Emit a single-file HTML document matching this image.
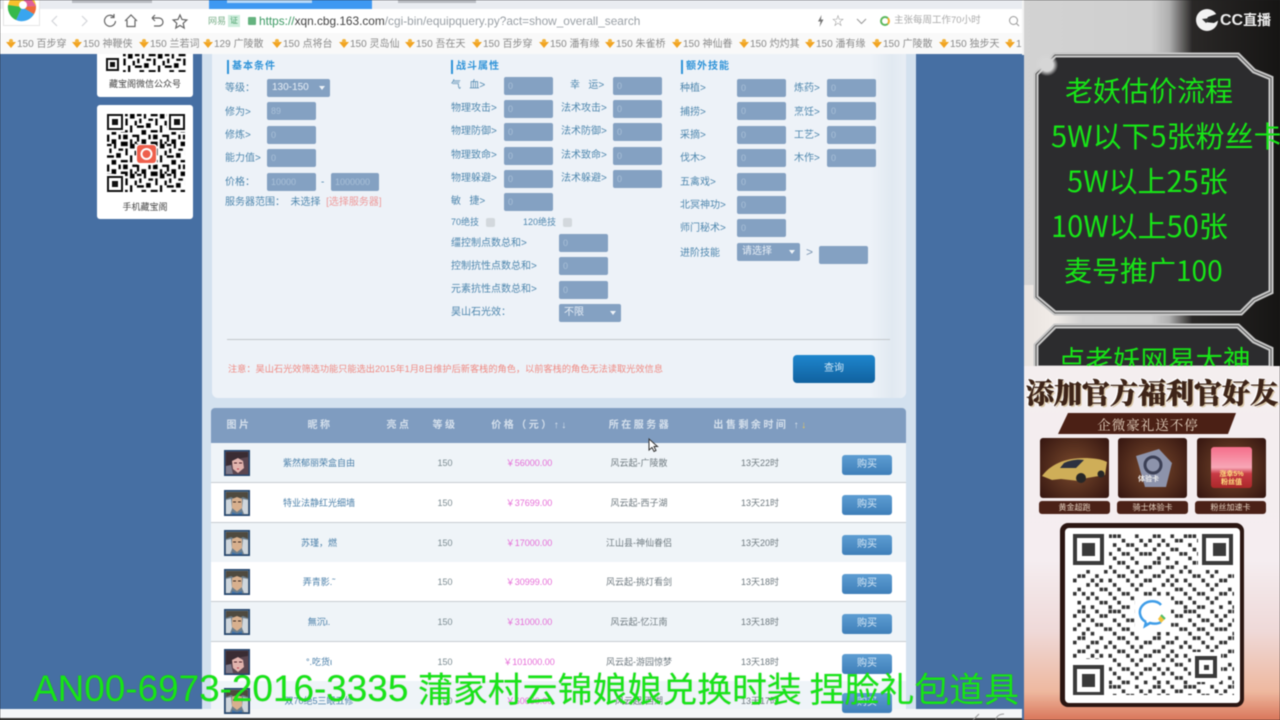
<!DOCTYPE html>
<html lang="zh"><head><meta charset="utf-8"><title>藏宝阁</title>
<style>
*{box-sizing:border-box}
html,body{margin:0;padding:0;width:1280px;height:720px;overflow:hidden;background:#222}
body{font-family:"Liberation Sans","Noto Sans CJK SC",sans-serif;position:relative}
#w{position:absolute;inset:0;filter:blur(.45px);overflow:hidden}
.a,.l,.i,.s,.h,.c{position:absolute}
.l{font-size:10px;color:#4f87ae;white-space:nowrap;line-height:14px}
.i{width:49px;height:18px;background:#84a1c2;border-radius:2px;color:#a9c0d8;font-size:9px;line-height:18px;padding-left:4px}
.s{height:18px;background:#84a1c2;border-radius:2px;color:#e7eef6;font-size:10px;line-height:18px;padding-left:5px}
.s:after{content:"";position:absolute;right:5px;top:7px;border:3px solid transparent;border-top:4px solid #eef3f8}
.h{font-size:10px;font-weight:bold;color:#2f93d8;white-space:nowrap;line-height:14px;border-left:2px solid #2f93d8;padding-left:3px;letter-spacing:1px}
.bm{position:absolute;top:33px;left:0;width:1022px;height:21px;background:#f9f9f9;white-space:nowrap;overflow:hidden}
.bm span{position:absolute;top:5px;font-size:10px;line-height:13px;color:#8a8a8a;padding-left:11px}
.bm span:before{content:"";position:absolute;left:0;top:4px;border-left:5px solid transparent;border-right:5px solid transparent;border-top:6px solid #f2a421}
.bm span:after{content:"";position:absolute;left:3px;top:1px;width:4px;height:4px;border-radius:50%;background:#f2b33d}
.r{position:absolute;left:211px;width:695px;height:40px;border-bottom:1px solid #c7ccd1;font-size:9px;line-height:41px}
.r b{position:absolute;top:0;font-weight:normal;text-align:center;transform:translateX(-50%);white-space:nowrap}
.r .n{left:108px;color:#4a7fa9}.r .v{left:234px;color:#7a8a90}.r .p{left:318px;color:#e66cd8}.r .g{left:428px;color:#6f7a80}.r .t{left:549px;color:#6f7a80}
.r svg{position:absolute;left:13px;top:7px;width:26px;height:26px}
.r i{position:absolute;left:631px;top:12px;width:50px;height:20px;border-radius:3px;background:linear-gradient(#5d9dd2,#3f7fb9);color:#d6e7f5;font-style:normal;font-size:10px;line-height:20px;text-align:center}
.th{position:absolute;top:418px;font-size:10px;font-weight:bold;line-height:16px;color:#d5e0ec;white-space:nowrap;letter-spacing:2.500px;transform:translateX(-50%)}
.g1{position:absolute;color:#17e517;white-space:nowrap;font-family:"Noto Sans CJK SC","Liberation Sans",sans-serif;line-height:1}
.lb{position:absolute;top:501px;height:13px;background:#4b2117;border-radius:3px;color:#e6d3c2;font-size:8px;line-height:13px;text-align:center}
.cd{position:absolute;top:438px;width:69px;height:60px;border-radius:3px;background:radial-gradient(circle,#7a4a2d,#341510)}
</style></head><body><div id="w">

<svg width="0" height="0" style="position:absolute"><defs>
<symbol id="m" viewBox="0 0 26 26"><rect width="26" height="26" fill="#24466e"/><rect x="1.500" y="1.500" width="23" height="23" fill="#6e7f8c"/><path d="M2 2h22v7l-5-2-6 3-6-3-5 2z" fill="#4f4a3f"/><path d="M8 9l5-2 5 2v9l-5 4-5-4z" fill="#d8b08e"/><path d="M2 10l5-1 1 10-2 5H2zM24 10l-5-1-1 10 2 5h4z" fill="#cfd6dc"/><path d="M9 12h3M14 12h3" stroke="#3b2a22" stroke-width="1"/><path d="M8 22l5 2 5-2v2.500H8z" fill="#3c6fa8"/></symbol>
<symbol id="f" viewBox="0 0 26 26"><rect width="26" height="26" fill="#24466e"/><rect x="1.500" y="1.500" width="23" height="23" fill="#5b4650"/><path d="M2 2h22v5l-6 1-6 2-5 5-5 1z" fill="#3a2c33"/><path d="M8 11l6-3 5 3 1 7-6 5-5-4z" fill="#e2b4ae"/><path d="M10 13h3M15 13h3" stroke="#4a2027" stroke-width="1"/><path d="M13 19h2" stroke="#b8394a" stroke-width="1"/><path d="M2 16l5-1 2 9H2z" fill="#7d7a8b"/></symbol>
</defs></svg>

<!-- browser chrome -->
<div class="a" style="left:0;top:0;width:1022px;height:9px;background:#e9ecf1"></div>
<div class="a" style="left:209px;top:0;width:163px;height:9px;background:#3e98f2"></div>
<div class="a" style="left:227px;top:0;width:85px;height:3px;background:#b7d8f8"></div>
<div class="a" style="left:72px;top:0;width:80px;height:3px;background:#b9bcc2"></div>
<div class="a" style="left:398px;top:0;width:78px;height:3px;background:#b9bcc2"></div>
<div class="a" style="left:0;top:9px;width:1022px;height:24px;background:#fff"></div>
<div class="a" style="left:3px;top:0;width:37px;height:26px;background:#fff;border:1px solid #e6e6e6;border-top:0"></div>
<svg class="a" style="left:7px;top:0" width="30" height="22" viewBox="0 0 30 22"><circle cx="15" cy="7" r="14" fill="#f7c02c"/><path d="M15 7L1 5A14 14 0 0 0 9 20z" fill="#36b94b"/><path d="M15 7L9 20A14 14 0 0 0 27 14z" fill="#39a5ef"/><path d="M15 7L27 14A14 14 0 0 0 29 6z" fill="#ef6a3c"/><path d="M15 7L29 6 25 0 17 0z" fill="#e0609a"/><circle cx="16" cy="5" r="4" fill="#fff"/></svg>
<svg class="a" style="left:50px;top:11px" width="145" height="20" viewBox="0 0 145 20" fill="none" stroke="#777" stroke-width="1.200"><path d="M7 5l-5 5 5 5M32 5l5 5-5 5" stroke="#d4d6da"/><path d="M64 6a5.500 5.500 0 1 0 1.500 4M64 3v3.500h-3.500" stroke="#666"/><path d="M75 10l6-6 6 6M77 9v6.500h8V9" stroke="#666"/><path d="M102 7h7a4 4 0 0 1 0 8h-5M102 7l3-3M102 7l3 3" stroke="#666"/><path d="M130 4l2 4.500 4.800.5-3.600 3.300 1 4.700-4.200-2.500-4.200 2.500 1-4.700-3.600-3.300 4.800-.5z" stroke="#666"/></svg>
<div class="a" style="left:208px;top:15px;font-size:9px;color:#7ab08a;line-height:12px">网易</div>
<div class="a" style="left:228px;top:15px;width:12px;height:12px;background:#cfeedd;font-size:8px;line-height:12px;text-align:center;color:#4fa36f">证</div>
<div class="a" style="left:248px;top:17px;width:8px;height:8px;background:#65b37f;border-radius:1px"></div>
<div class="a" style="left:259px;top:13px;font-size:11.850px;line-height:16px;white-space:nowrap;color:#9aa0a6"><span style="color:#3d9a64">https://</span><span style="color:#444">xqn.cbg.163.com</span>/cgi-bin/equipquery.py?act=show_overall_search</div>
<svg class="a" style="left:817px;top:15px" width="7" height="12" viewBox="0 0 7 12"><path d="M4.500 0L1 6.500h2.500L2.500 12 6.500 4.500H4z" fill="#777"/></svg>
<div class="a" style="left:832px;top:14px;font-size:12px;line-height:14px;color:#888">☆</div>
<svg class="a" style="left:856px;top:18px" width="11" height="7" fill="none" stroke="#999"><path d="M1 1l4.500 4.500L10 1"/></svg>
<div class="a" style="left:880px;top:16px;width:10px;height:10px;border-radius:50%;border:2px solid #5cb85c;border-right-color:#f0ad2e"></div>
<div class="a" style="left:894px;top:14px;font-size:9.500px;line-height:13px;color:#aaa;white-space:nowrap">主张每周工作70小时</div>
<svg class="a" style="left:1008px;top:15px" width="12" height="12" fill="none" stroke="#999"><circle cx="5.500" cy="5.500" r="4"/><path d="M8.500 8.500l2.500 2.500"/></svg>
<div class="bm">
<span style="left:6px">150 百步穿</span><span style="left:72px">150 神鞭侠</span><span style="left:139px">150 兰若词</span><span style="left:203px">129 广陵散</span><span style="left:272px">150 点将台</span><span style="left:339px">150 灵岛仙</span><span style="left:405px">150 吾在天</span><span style="left:472px">150 百步穿</span><span style="left:539px">150 潘有缘</span><span style="left:605px">150 朱雀桥</span><span style="left:672px">150 神仙眷</span><span style="left:739px">150 灼灼其</span><span style="left:805px">150 潘有缘</span><span style="left:872px">150 广陵散</span><span style="left:939px">150 独步天</span><span style="left:1005px">1</span>
</div>

<!-- page -->
<div class="a" style="left:0;top:54px;width:1022px;height:664px;background:#466fa3"></div>
<div class="a" style="left:0;top:709px;width:1022px;height:9px;background:#f4f6f7"></div>
<div class="a" style="left:0;top:718px;width:1022px;height:2px;background:#3a3936"></div>
<div class="a" style="left:202px;top:54px;width:714px;height:655px;background:#d3e1ef"></div>
<div class="a" style="left:212px;top:54px;width:694px;height:344px;background:#edf2f8;border-radius:0 0 6px 6px"></div>
<div class="a" style="left:870px;top:54px;width:36px;height:344px;background:linear-gradient(90deg,#edf2f8,#e1e9f1 60%,#e8eef5);border-radius:0 0 6px 0"></div>

<!-- left QR cards -->
<div class="a" style="left:97px;top:54px;width:96px;height:43px;background:#fff;border-radius:0 0 3px 3px"></div>
<svg class="a" style="left:105px;top:54px" width="81" height="18" viewBox="0 0 81 18"><defs><pattern id="sq" width="13" height="13" patternUnits="userSpaceOnUse" patternTransform="scale(2.300)"><path d="M0 0h2v1H0zM3 0h1v2H3zM6 0h3v1H6zM10 0h2v2h-2zM1 2h1v2H1zM5 2h2v1H5zM8 2h1v3H8zM12 3h1v2h-1zM0 5h3v1H0zM4 4h2v2H4zM10 5h1v3h-1zM2 7h2v2H2zM6 7h3v1H6zM0 9h1v3H0zM5 9h1v2H5zM7 9h2v2H7zM11 9h2v1h-2zM2 11h2v2H2zM10 11h1v2h-1zM12 12h1v1h-1zM6 12h3v1H6z"/></pattern></defs><rect width="81" height="18" fill="url(#sq)"/><rect x="0" y="0" width="18" height="18" fill="#fff"/><path d="M1 4h13v13H1z" fill="#111"/><path d="M3 6h9v9H3z" fill="#fff"/><path d="M5 8h5v5H5z" fill="#111"/></svg>
<div class="a" style="left:97px;top:78px;width:96px;text-align:center;font-size:9px;line-height:13px;color:#444">藏宝阁微信公众号</div>
<div class="a" style="left:97px;top:105px;width:96px;height:114px;background:#fff;border-radius:3px"></div>
<svg class="a" style="left:107px;top:114px" width="78" height="78" viewBox="0 0 78 78"><rect width="78" height="78" fill="url(#sq)"/><g><rect width="18" height="18" fill="#fff"/><rect x="60" width="18" height="18" fill="#fff"/><rect y="60" width="18" height="18" fill="#fff"/><path d="M0 0h16v16H0zM62 0h16v16H62zM0 62h16v16H0z" fill="#111"/><path d="M2 2h12v12H2zM64 2h12v12H64zM2 64h12v12H2z" fill="#fff"/><path d="M5 5h6v6H5zM67 5h6v6h-6zM5 67h6v6H5z" fill="#111"/></g><rect x="29" y="30" width="21" height="21" rx="3" fill="#fff"/><rect x="30" y="31" width="19" height="18" rx="3" fill="#ee5f4c"/><circle cx="39.500" cy="40" r="5" fill="none" stroke="#fff" stroke-width="2"/></svg>
<div class="a" style="left:97px;top:201px;width:96px;text-align:center;font-size:9px;line-height:13px;color:#444">手机藏宝阁</div>

<!-- form -->
<div class="h" style="left:227px;top:60px">基本条件</div>
<div class="h" style="left:451px;top:60px">战斗属性</div>
<div class="h" style="left:681px;top:60px">额外技能</div>
<div class="l" style="left:225px;top:82px">等级：</div><div class="s" style="left:267px;top:79px;width:63px">130-150</div>
<div class="l" style="left:225px;top:106px">修为&gt;</div><div class="i" style="left:267px;top:102px">89</div>
<div class="l" style="left:225px;top:129px">修炼&gt;</div><div class="i" style="left:267px;top:126px">0</div>
<div class="l" style="left:225px;top:152px">能力值&gt;</div><div class="i" style="left:267px;top:149px">0</div>
<div class="l" style="left:225px;top:176px">价格：</div><div class="i" style="left:267px;top:173px">10000</div><div class="l" style="left:321px;top:176px">-</div><div class="i" style="left:331px;top:173px;width:48px">1000000</div>
<div class="l" style="left:225px;top:196px">服务器范围：&nbsp;&nbsp;未选择&nbsp;&nbsp;<span style="color:#ee9a9a">[选择服务器]</span></div>

<div class="l" style="left:451px;top:79px">气&nbsp;&nbsp;&nbsp;血&gt;</div><div class="i" style="left:504px;top:77px">0</div>
<div class="l" style="left:451px;top:102px">物理攻击&gt;</div><div class="i" style="left:504px;top:100px">0</div>
<div class="l" style="left:451px;top:125px">物理防御&gt;</div><div class="i" style="left:504px;top:123px">0</div>
<div class="l" style="left:451px;top:149px">物理致命&gt;</div><div class="i" style="left:504px;top:147px">0</div>
<div class="l" style="left:451px;top:172px">物理躲避&gt;</div><div class="i" style="left:504px;top:170px">0</div>
<div class="l" style="left:451px;top:195px">敏&nbsp;&nbsp;&nbsp;捷&gt;</div><div class="i" style="left:504px;top:193px">0</div>
<div class="l" style="left:570px;top:79px">幸&nbsp;&nbsp;&nbsp;运&gt;</div><div class="i" style="left:613px;top:77px">0</div>
<div class="l" style="left:561px;top:102px">法术攻击&gt;</div><div class="i" style="left:613px;top:100px">0</div>
<div class="l" style="left:561px;top:125px">法术防御&gt;</div><div class="i" style="left:613px;top:123px">0</div>
<div class="l" style="left:561px;top:149px">法术致命&gt;</div><div class="i" style="left:613px;top:147px">0</div>
<div class="l" style="left:561px;top:172px">法术躲避&gt;</div><div class="i" style="left:613px;top:170px">0</div>
<div class="l" style="left:451px;top:215px;font-size:9px">70绝技</div><div class="a" style="left:486px;top:218px;width:9px;height:9px;background:#d3d8dd;border-radius:2px"></div>
<div class="l" style="left:523px;top:215px;font-size:9px">120绝技</div><div class="a" style="left:563px;top:218px;width:9px;height:9px;background:#d3d8dd;border-radius:2px"></div>
<div class="l" style="left:451px;top:237px">缰控制点数总和&gt;</div><div class="i" style="left:559px;top:234px">0</div>
<div class="l" style="left:451px;top:260px">控制抗性点数总和&gt;</div><div class="i" style="left:559px;top:257px">0</div>
<div class="l" style="left:451px;top:283px">元素抗性点数总和&gt;</div><div class="i" style="left:559px;top:281px">0</div>
<div class="l" style="left:451px;top:306px">昊山石光效：</div><div class="s" style="left:559px;top:304px;width:62px">不限</div>

<div class="l" style="left:680px;top:82px">种植&gt;</div><div class="i" style="left:737px;top:79px">0</div><div class="l" style="left:794px;top:82px">炼药&gt;</div><div class="i" style="left:827px;top:79px">0</div>
<div class="l" style="left:680px;top:106px">捕捞&gt;</div><div class="i" style="left:737px;top:102px">0</div><div class="l" style="left:794px;top:106px">烹饪&gt;</div><div class="i" style="left:827px;top:102px">0</div>
<div class="l" style="left:680px;top:129px">采摘&gt;</div><div class="i" style="left:737px;top:126px">0</div><div class="l" style="left:794px;top:129px">工艺&gt;</div><div class="i" style="left:827px;top:126px">0</div>
<div class="l" style="left:680px;top:152px">伐木&gt;</div><div class="i" style="left:737px;top:149px">0</div><div class="l" style="left:794px;top:152px">木作&gt;</div><div class="i" style="left:827px;top:149px">0</div>
<div class="l" style="left:680px;top:176px">五禽戏&gt;</div><div class="i" style="left:737px;top:173px">0</div>
<div class="l" style="left:680px;top:199px">北冥神功&gt;</div><div class="i" style="left:737px;top:196px">0</div>
<div class="l" style="left:680px;top:222px">师门秘术&gt;</div><div class="i" style="left:737px;top:219px">0</div>
<div class="l" style="left:680px;top:247px">进阶技能</div><div class="s" style="left:737px;top:243px;width:63px">请选择</div><div class="l" style="left:806px;top:245px;font-size:12px;color:#7d97b3">&gt;</div><div class="i" style="left:819px;top:246px">&nbsp;</div>

<div class="a" style="left:227px;top:339px;width:663px;height:1px;background:#c3c8cc"></div>
<div class="l" style="left:228px;top:362px;font-size:9.200px;color:#ef8a82">注意：昊山石光效筛选功能只能选出2015年1月8日维护后新客栈的角色，以前客栈的角色无法读取光效信息</div>
<div class="a" style="left:793px;top:355px;width:82px;height:28px;border-radius:4px;background:linear-gradient(#1e86cd,#10619f);color:#cfe6f6;font-size:10px;line-height:28px;text-align:center">查询</div>

<!-- table -->
<div class="a" style="left:211px;top:408px;width:695px;height:36px;background:#7f9cc0;border-radius:4px 4px 0 0;border-bottom:1px solid #6e8bb0"></div>
<div class="th" style="left:239px">图片</div><div class="th" style="left:320px">昵称</div><div class="th" style="left:399px">亮点</div><div class="th" style="left:445px">等级</div><div class="th" style="left:530px">价格（元）↑↓</div><div class="th" style="left:640px">所在服务器</div><div class="th" style="left:761px">出售剩余时间 ↑<span style="color:#e6c75e">↓</span></div>

<div class="r" style="top:443px;background:#eff4f8"><svg><use href="#f"/></svg><b class="n">紫然郁丽荣盒自由</b><b class="v">150</b><b class="p">￥56000.00</b><b class="g">风云起-广陵散</b><b class="t">13天22时</b><i>购买</i></div>
<div class="r" style="top:483px;background:#fff"><svg><use href="#m"/></svg><b class="n">特业法静红光细墙</b><b class="v">150</b><b class="p">￥37699.00</b><b class="g">风云起-西子湖</b><b class="t">13天21时</b><i>购买</i></div>
<div class="r" style="top:523px;background:#eff4f8"><svg><use href="#m"/></svg><b class="n">苏瑾，燃</b><b class="v">150</b><b class="p">￥17000.00</b><b class="g">江山县-神仙眷侣</b><b class="t">13天20时</b><i>购买</i></div>
<div class="r" style="top:562px;background:#fff"><svg><use href="#m"/></svg><b class="n">弄青影.˜</b><b class="v">150</b><b class="p">￥30999.00</b><b class="g">风云起-挑灯看剑</b><b class="t">13天18时</b><i>购买</i></div>
<div class="r" style="top:602px;background:#eff4f8"><svg><use href="#m"/></svg><b class="n">無沉ι.</b><b class="v">150</b><b class="p">￥31000.00</b><b class="g">风云起-忆江南</b><b class="t">13天18时</b><i>购买</i></div>
<div class="r" style="top:642px;background:#fff"><svg><use href="#f"/></svg><b class="n">°.吃货ι</b><b class="v">150</b><b class="p">￥101000.00</b><b class="g">风云起-游园惊梦</b><b class="t">13天18时</b><i>购买</i></div>
<div class="r" style="top:681px;height:28px;background:#eff4f8;border:0"><svg><use href="#m"/></svg><b class="n">双70绝5三眼五修</b><b class="v">150</b><b class="p">￥60000.00</b><b class="g">风云起-西湖</b><b class="t">13天17时</b><i>购买</i></div>
<svg class="a" style="left:648px;top:438px" width="11" height="15" viewBox="0 0 11 15"><path d="M1 1v11l3-2.500 2 4 2-1-2-4h3.500z" fill="#fff" stroke="#333"/></svg>
<svg class="a" style="left:970px;top:711px" width="50" height="9" fill="none" stroke="#999"><path d="M3 9l6-6M26 9c0-4 4-6 8-6"/></svg>

<!-- right stream -->
<div class="a" style="left:1022px;top:0;width:258px;height:366px;background:linear-gradient(90deg,#d3d3d3 0,#cfcfcf 50%,#b0b0b0 57%,#2a2827 66%,#161514 100%)"></div>
<div class="a" style="left:1022px;top:0;width:2px;height:55px;background:#f3f3f3"></div>
<div class="a" style="left:1022px;top:55px;width:2px;height:665px;background:#466fa3"></div>
<div class="a" style="left:1024px;top:285px;width:60px;height:81px;background:linear-gradient(90deg,#e9e4e0,#f1ece8 50%,#cfcfcf)"></div>
<svg class="a" style="left:1033px;top:52px" width="243" height="316" viewBox="0 0 243 316">
<g fill="#2c2c2e" stroke="#c8c8c8" stroke-width="5"><path d="M22 3H205L221 19 238 26V240L221 248 208 261H22L3 245V22z"/><path d="M22 274H205L221 289 238 297V316H3V293z"/></g>
<g fill="none" stroke="#555" stroke-width="1"><path d="M22 3H205L221 19 238 26V240L221 248 208 261H22L3 245V22z"/><path d="M22 274H205L221 289 238 297V316H3V293z"/></g></svg>
<div class="a" style="left:1036px;top:54px;width:22px;height:22px;background:radial-gradient(circle,#d6d6d6 40%,transparent 72%)"></div>
<div class="g1" style="left:1065px;top:76px;font-size:28px">老妖估价流程</div>
<div class="g1" style="left:1051px;top:121px;font-size:29px;width:229px;overflow:hidden">5W以下5张粉丝卡</div>
<div class="g1" style="left:1067px;top:166px;font-size:29px">5W以上25张</div>
<div class="g1" style="left:1051px;top:211px;font-size:29px">10W以上50张</div>
<div class="g1" style="left:1064px;top:256px;font-size:28px">麦号推广100</div>
<div class="g1" style="left:1058px;top:345px;font-size:27.500px;height:21px;overflow:hidden">点老妖网易大神</div>
<svg class="a" style="left:1194px;top:8px" width="26" height="24" viewBox="0 0 26 24"><circle cx="13" cy="12" r="11" fill="#f2f2f2"/><path d="M25 5L14 9l-3 5 9 1 5-3z" fill="#222"/><path d="M8 11l9-1-5 5z" fill="#333"/></svg>
<div class="a" style="left:1220px;top:9px;font-size:16px;line-height:22px;font-weight:bold;color:#eee;white-space:nowrap">CC<span style="font-size:14px">直播</span></div>

<!-- promo card -->
<div class="a" style="left:1024px;top:366px;width:256px;height:354px;background:linear-gradient(#f4eeef 0,#f5edf0 55%,#efd9d8 75%,#eeb89f 92%,#d9765a 100%)"></div>
<div class="a" style="left:1024px;top:373px;width:256px;text-align:center;font-family:'Noto Serif CJK SC','Liberation Serif',serif;font-weight:900;font-size:28px;line-height:38px;color:#3e2418;white-space:nowrap;-webkit-text-stroke:.5px #3e2418;text-shadow:1.500px 1.500px 0 #d9c7a8,-1.500px -1px 0 #fff,1px -1px 0 #fff,-1px 1px 0 #fff">添加官方福利官好友</div>
<svg class="a" style="left:1058px;top:413px" width="180" height="22"><path d="M10 0H178L170 21H0z" fill="#4b2015"/></svg>
<div class="a" style="left:1058px;top:415px;width:180px;text-align:center;font-family:'Noto Serif CJK SC',serif;font-size:13.500px;line-height:18px;color:#e5d3c0;letter-spacing:1px">企微豪礼送不停</div>
<div class="cd" style="left:1040px"></div><div class="cd" style="left:1118px"></div><div class="cd" style="left:1197px"></div>
<svg class="a" style="left:1040px;top:452px" width="69" height="34" viewBox="0 0 69 34"><path d="M2 24C10 13 24 6 44 6c8 0 18 1 23 4l-2 13-18 3-8 3-18-2-9 1z" fill="#cfae58"/><path d="M24 11c6-3 14-4 20-3l-8 8H20z" fill="#2d3140"/><circle cx="41" cy="26" r="5" fill="#272727"/><circle cx="61" cy="22" r="3.500" fill="#272727"/></svg>
<svg class="a" style="left:1133px;top:449px" width="42" height="42" viewBox="0 0 42 42"><path d="M3 7L26 0l13 14-6 24-21 0z" fill="#8d93ab"/><circle cx="20" cy="16" r="8" fill="none" stroke="#3b3f55" stroke-width="3"/></svg>
<div class="a" style="left:1138px;top:475px;font-size:7px;line-height:9px;font-weight:bold;color:#eee">体验卡</div>
<div class="a" style="left:1211px;top:447px;width:41px;height:41px;border-radius:3px;background:linear-gradient(#f56e8a,#f8a7b7 50%,#c93a45 65%,#ab2829)"></div>
<div class="a" style="left:1211px;top:471px;width:41px;text-align:center;font-size:7px;line-height:8px;font-weight:bold;color:#ffe07f">涨幸5%<br>粉丝值</div>
<div class="lb" style="left:1039px;width:71px">黄金超跑</div><div class="lb" style="left:1117px;width:71px">骑士体验卡</div><div class="lb" style="left:1195px;width:71px">粉丝加速卡</div>

<!-- big QR -->
<div class="a" style="left:1060px;top:523px;width:184px;height:184px;background:#2b1612;border-radius:8px"></div>
<div class="a" style="left:1065px;top:528px;width:175px;height:175px;background:#fff;border-radius:4px"></div>
<svg class="a" style="left:1073px;top:534px" width="161" height="161" viewBox="0 0 161 161">
<defs><pattern id="bq" width="17" height="17" patternUnits="userSpaceOnUse" patternTransform="scale(4.430)">
<path stroke="#333" stroke-width=".82" fill="none" d="M1 .5h.8M2 .5h.8M5 .5h.8M8 .5h.8M9 .5h.8M10 .5h.8M14 .5h.8M0 1.500h.8M3 1.500h.8M6 1.500h.8M7 1.500h.8M11 1.500h.8M15 1.500h.8M2 2.500h.8M4 2.500h.8M9 2.500h.8M12 2.500h.8M13 2.500h.8M16 2.500h.8M1 3.500h.8M5 3.500h.8M6 3.500h.8M10 3.500h.8M14 3.500h.8M0 4.500h.8M3 4.500h.8M7 4.500h.8M8 4.500h.8M11 4.500h.8M12 4.500h.8M15 4.500h.8M16 4.500h.8M2 5.500h.8M4 5.500h.8M9 5.500h.8M13 5.500h.8M1 6.500h.8M2 6.500h.8M6 6.500h.8M10 6.500h.8M11 6.500h.8M14 6.500h.8M0 7.500h.8M4 7.500h.8M5 7.500h.8M8 7.500h.8M12 7.500h.8M16 7.500h.8M3 8.500h.8M7 8.500h.8M9 8.500h.8M13 8.500h.8M15 8.500h.8M1 9.500h.8M2 9.500h.8M5 9.500h.8M10 9.500h.8M11 9.500h.8M14 9.500h.8M0 10.500h.8M4 10.500h.8M6 10.500h.8M8 10.500h.8M12 10.500h.8M16 10.500h.8M3 11.500h.8M5 11.500h.8M9 11.500h.8M13 11.500h.8M15 11.500h.8M1 12.500h.8M6 12.500h.8M7 12.500h.8M10 12.500h.8M14 12.500h.8M0 13.500h.8M2 13.500h.8M4 13.500h.8M8 13.500h.8M11 13.500h.8M12 13.500h.8M16 13.500h.8M3 14.500h.8M5 14.500h.8M9 14.500h.8M13 14.500h.8M15 14.500h.8M1 15.500h.8M6 15.500h.8M7 15.500h.8M10 15.500h.8M14 15.500h.8M2 16.500h.8M4 16.500h.8M8 16.500h.8M11 16.500h.8M12 16.500h.8M16 16.500h.8"/></pattern></defs>
<rect width="161" height="161" fill="url(#bq)"/>
<rect x="0" y="0" width="36" height="36" fill="#fff"/><rect x="125" y="0" width="36" height="36" fill="#fff"/><rect x="0" y="125" width="36" height="36" fill="#fff"/><rect x="118" y="118" width="30" height="30" fill="#fff"/><rect x="62" y="62" width="36" height="36" fill="#fff"/>
<g fill="none" stroke="#3a3a3a" stroke-width="4"><rect x="2" y="2" width="27" height="27"/><rect x="133" y="2" width="27" height="27" transform="translate(-2 0)"/><rect x="2" y="133" width="27" height="27"/><rect x="124" y="124" width="18" height="18"/></g>
<path d="M9 9h13v13H9zM140 9h13v13h-13zM9 140h13v13H9zM131 131h5v5h-5z" fill="#3a3a3a"/>
<path d="M73 88c-7-4-8-12-3-17 5-5 14-5 18 0" fill="none" stroke="#3f9de8" stroke-width="2.500"/><path d="M73 88l-1 4 5-3c4 1 8 1 11-1" fill="none" stroke="#3f9de8" stroke-width="2.500"/><path d="M88 81l4 4-4 4-3-4z" fill="#f2c13d"/><path d="M88 81l4 4" stroke="#4fbf6a" stroke-width="2"/>
</svg>

<!-- bottom overlay -->
<div class="g1" style="left:33px;top:669px;height:40px;font-size:36.900px;line-height:40px;font-family:'Liberation Sans',sans-serif;text-shadow:0 0 1px rgba(0,80,0,.4)">AN00-6973-2016-3335</div>
<div class="g1" style="left:418px;top:668px;height:40px;font-size:34.900px;line-height:40px;text-shadow:0 0 1px rgba(0,80,0,.4)">蒲家村云锦娘娘兑换时装 捏脸礼包道具</div>
</div></body></html>
